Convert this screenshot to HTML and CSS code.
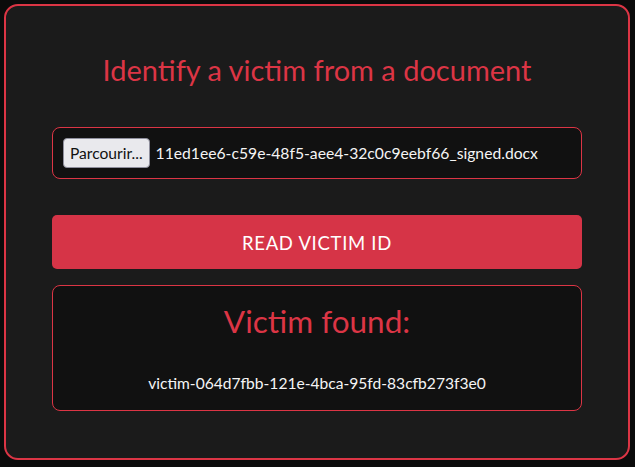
FILE: index.html
```html
<!DOCTYPE html>
<html lang="en">
<head>
<meta charset="utf-8">
<title>Identify a victim</title>
<link rel="stylesheet" href="styles.css">
</head>
<body>
<main class="card">
  <h1 class="title">Identify a victim from a document</h1>
  <div class="file-box">
    <span class="file-btn">Parcourir...</span>
    <span class="file-name">11ed1ee6-c59e-48f5-aee4-32c0c9eebf66_signed.docx</span>
  </div>
  <button class="read-btn" type="button">Read victim ID</button>
  <section class="result">
    <h2 class="result-title">Victim found:</h2>
    <p class="result-id">victim-064d7fbb-121e-4bca-95fd-83cfb273f3e0</p>
  </section>
</main>
</body>
</html>
```
FILE: styles.css
```css
* { box-sizing: border-box; }
html, body { margin: 0; }
body {
  background: #0b0b0b;
  padding: 4px 5px 7px 4px;
  font-family: "Lato", "Open Sans", sans-serif;
  color: #f2f2f2;
}
.card {
  border: 2px solid #dc3545;
  border-radius: 14px;
  background: #1b1b1b;
  padding: 0 46px 47px;
  display: flex;
  flex-direction: column;
}
.title {
  margin: 47px 0 0;
  font-size: 29px;
  line-height: 34px;
  font-weight: 400;
  color: #dc3545;
  text-align: center;
}
.file-box {
  margin-top: 40px;
  height: 52px;
  border: 1px solid #dc3545;
  border-radius: 8px;
  background: #111111;
  padding: 0 10px;
  display: flex;
  align-items: center;
  gap: 6px;
}
.file-btn {
  height: 30px;
  padding: 0 6px;
  display: flex;
  align-items: center;
  background: #e9e9ed;
  color: #111;
  border: 1px solid #8f8f9d;
  border-radius: 4px;
  font-size: 15.6px;
}
.file-name {
  font-size: 15.7px;
  color: #f5f5f5;
}
.read-btn {
  margin-top: 36px;
  height: 54px;
  flex-shrink: 0;
  border: none;
  border-radius: 5px;
  background: #d63447;
  color: #ffffff;
  font-family: inherit;
  font-size: 18.5px;
  text-transform: uppercase;
  letter-spacing: 0.7px;
  padding-top: 2px;
}
.result {
  margin-top: 16px;
  height: 126px;
  flex-shrink: 0;
  border: 1px solid #dc3545;
  border-radius: 8px;
  background: #111111;
  display: flex;
  flex-direction: column;
  align-items: center;
}
.result-title {
  margin: 15px 0 0;
  font-size: 31.5px;
  line-height: 40px;
  font-weight: 400;
  color: #dc3545;
}
.result-id {
  margin: 32px 0 0;
  font-size: 15.6px;
  line-height: 20px;
  color: #f5f5f5;
}
```
